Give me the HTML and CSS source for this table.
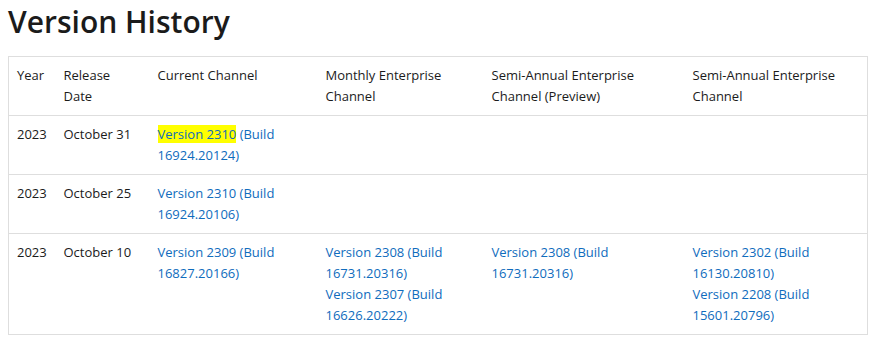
FILE: index.html
```html
<!DOCTYPE html>
<html>
<head>
<meta charset="utf-8">
<link rel="stylesheet" href="styles.css">
</head>
<body>
<h1 class="title">Version History</h1>
<table class="history">
  <colgroup>
    <col class="c-year">
    <col class="c-date">
    <col class="c-cur">
    <col class="c-mon">
    <col class="c-sap">
    <col class="c-sa">
  </colgroup>
  <thead>
    <tr>
      <th>Year</th>
      <th>Release Date</th>
      <th>Current Channel</th>
      <th>Monthly Enterprise Channel</th>
      <th>Semi-Annual Enterprise Channel (Preview)</th>
      <th>Semi-Annual Enterprise Channel</th>
    </tr>
  </thead>
  <tbody>
    <tr>
      <td>2023</td>
      <td>October 31</td>
      <td><a href="#"><mark class="hl">Version 2310</mark> (Build 16924.20124)</a></td>
      <td></td>
      <td></td>
      <td></td>
    </tr>
    <tr>
      <td>2023</td>
      <td>October 25</td>
      <td><a href="#">Version 2310 (Build 16924.20106)</a></td>
      <td></td>
      <td></td>
      <td></td>
    </tr>
    <tr>
      <td>2023</td>
      <td>October 10</td>
      <td><a href="#">Version 2309 (Build 16827.20166)</a></td>
      <td><a href="#">Version 2308 (Build 16731.20316)</a><br><a href="#">Version 2307 (Build 16626.20222)</a></td>
      <td><a href="#">Version 2308 (Build 16731.20316)</a></td>
      <td><a href="#">Version 2302 (Build 16130.20810)</a><br><a href="#">Version 2208 (Build 15601.20796)</a></td>
    </tr>
  </tbody>
</table>
</body>
</html>
```
FILE: styles.css
```css
html, body {
  margin: 0;
  padding: 0;
  background: #fff;
}
body {
  padding: 0 5px 0 8px;
  font-family: "Open Sans", "Noto Sans", sans-serif;
  color: #1b1b1b;
}
.title {
  margin: 0;
  padding-top: 2px;
  height: 56px;
  box-sizing: border-box;
  font-size: 30px;
  font-weight: 600;
  line-height: 40px;
}
.history {
  width: 859px;
  border-collapse: collapse;
  table-layout: fixed;
  font-size: 13px;
  line-height: 21px;
}
.c-year { width: 47px; }
.c-date { width: 94px; }
.c-cur { width: 168px; }
.c-mon { width: 166px; }
.c-sap { width: 201px; }
.c-sa { width: 183px; }
.history th,
.history td {
  border: 1px solid #dedede;
  border-left: none;
  border-right: none;
  padding: 8px 8px;
  text-align: left;
  vertical-align: top;
  font-weight: 400;
}
.history th:first-child,
.history td:first-child { border-left: 1px solid #dedede; }
.history th:last-child,
.history td:last-child { border-right: 1px solid #dedede; }
.history a {
  color: #0f6cbd;
  text-decoration: none;
}
.hl {
  background: #ffff00;
  color: #0f6cbd;
}
```
